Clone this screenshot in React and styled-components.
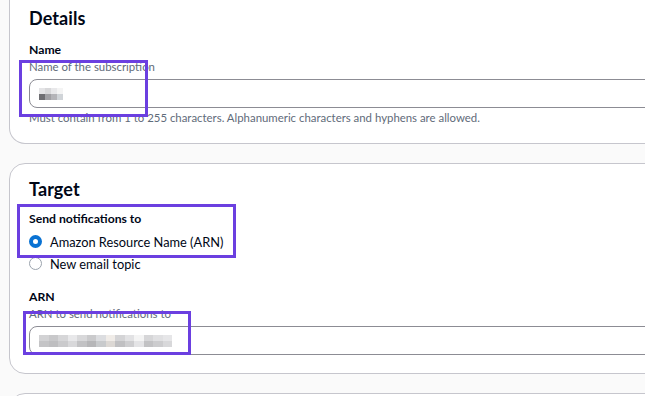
import styled, { createGlobalStyle } from "styled-components"

const GlobalStyle = createGlobalStyle`
  body {
    margin: 0;
    background: #fafafa;
    font-family: Lato, "Liberation Sans", sans-serif;
    color: #000716;
  }
`

const nameBlur = [
  ["#e4e4e6", "#d8d8da", "#e8e8ea", "#f4f4f4", "#fff"],
  ["#6e6e72", "#a0a0a4", "#b4b4b8", "#d0d4d8", "#fff"],
]

const arnBlur = [
  ["#d2d2d4", "#c8c8ca", "#d6d6d8", "#e8e8ea", "#d8d8da", "#cacacc", "#dcdde0", "#f0ece8", "#d4d4d6", "#e2e2e4", "#f4f4f4", "#d6d6d8", "#e0e0e2", "#e6e6e8"],
  ["#c4c4c6", "#bebec0", "#cacacc", "#d8d8da", "#c2c2c4", "#b6b6b8", "#c8cacc", "#dcd8d4", "#c0c0c2", "#ceced0", "#e4e4e6", "#c2c2c4", "#cccccE", "#d8d8da"],
]

const Blur = ({ rows, size }) => (
  <BlurGrid>
    {rows.map((row, i) => (
      <BlurRow key={i}>
        {row.map((c, j) => (
          <Pixel key={j} $size={size} style={{ background: c }} />
        ))}
      </BlurRow>
    ))}
  </BlurGrid>
)

const App = () => {
  return (
    <Page>
      <GlobalStyle />
      <Card $cut>
        <Heading>Details</Heading>
        <Field $top={13}>
          <Label>Name</Label>
          <Description>Name of the subscription</Description>
          <Input>
            <Blur rows={nameBlur} size={6} />
          </Input>
          <Hint>Must contain from 1 to 255 characters. Alphanumeric characters and hyphens are allowed.</Hint>
          <Highlight style={{ left: -10, top: 18, width: 129, height: 57 }} />
        </Field>
      </Card>

      <Card>
        <Heading>Target</Heading>
        <Field $top={11}>
          <Label>Send notifications to</Label>
          <RadioList>
            <RadioRow>
              <Radio $checked />
              <RadioText>Amazon Resource Name (ARN)</RadioText>
            </RadioRow>
            <RadioRow>
              <Radio />
              <RadioText>New email topic</RadioText>
            </RadioRow>
          </RadioList>
          <Highlight style={{ left: -12, top: -7, width: 219, height: 54 }} />
        </Field>
        <Field $top={15}>
          <Label>ARN</Label>
          <Description>ARN to send notifications to</Description>
          <Input>
            <Blur rows={arnBlur} size={9.5} />
          </Input>
          <Highlight style={{ left: -6, top: 22, width: 168, height: 44 }} />
        </Field>
      </Card>

      <Card $stub />
    </Page>
  )
}

export default App

const Page = styled.div`
  width: 645px;
  height: 396px;
  overflow: hidden;
  padding-left: 9px;
  box-sizing: border-box;
  display: flex;
  flex-direction: column;
  gap: 19px;
`

const Card = styled.div`
  width: 720px;
  flex-shrink: 0;
  background: #ffffff;
  border: 1px solid #c6c6cd;
  border-radius: 16px;
  box-sizing: border-box;
  padding: 14px 19px 18px;
  ${(p) =>
    p.$cut &&
    `
    border-top: none;
    border-top-left-radius: 0;
    border-top-right-radius: 0;
    padding-top: 7px;
    padding-bottom: 17px;
  `}
  ${(p) => p.$stub && `height: 40px;`}
`

const Heading = styled.h2`
  margin: 0;
  font-size: 18px;
  line-height: 22px;
  font-weight: 700;
  letter-spacing: 0.1px;
`

const Field = styled.div`
  position: relative;
  margin-top: ${(p) => p.$top}px;
`

const Label = styled.div`
  font-size: 12.2px;
  line-height: 16px;
  font-weight: 700;
`

const Description = styled.div`
  font-size: 11.4px;
  line-height: 16px;
  color: #5f6b7a;
  margin-top: 1px;
`

const Hint = styled.div`
  font-size: 11.4px;
  line-height: 16px;
  color: #5f6b7a;
  margin-top: 2px;
`

const Input = styled.div`
  height: 29px;
  margin-top: 4px;
  border: 1px solid #8c8c94;
  border-radius: 8px;
  box-sizing: border-box;
  display: flex;
  align-items: center;
  padding-left: 9px;
`

const BlurGrid = styled.div`
  display: flex;
  flex-direction: column;
`

const BlurRow = styled.div`
  display: flex;
`

const Pixel = styled.span`
  display: block;
  width: ${(p) => p.$size}px;
  height: 6px;
`

const RadioList = styled.div`
  display: flex;
  flex-direction: column;
  gap: 1px;
  margin-top: 4px;
`

const RadioRow = styled.label`
  display: flex;
  align-items: center;
  gap: 8px;
  height: 21px;
`

const Radio = styled.span`
  width: 13px;
  height: 13px;
  border-radius: 50%;
  box-sizing: border-box;
  flex-shrink: 0;
  margin-left: 0;
  border: ${(p) => (p.$checked ? "4px solid #0972d3" : "1.5px solid #9ba3ad")};
  background: #ffffff;
`

const RadioText = styled.span`
  font-size: 12.8px;
  line-height: 20px;
`

const Highlight = styled.div`
  position: absolute;
  border: 3px solid #6b3fe0;
  box-sizing: border-box;
  pointer-events: none;
`
